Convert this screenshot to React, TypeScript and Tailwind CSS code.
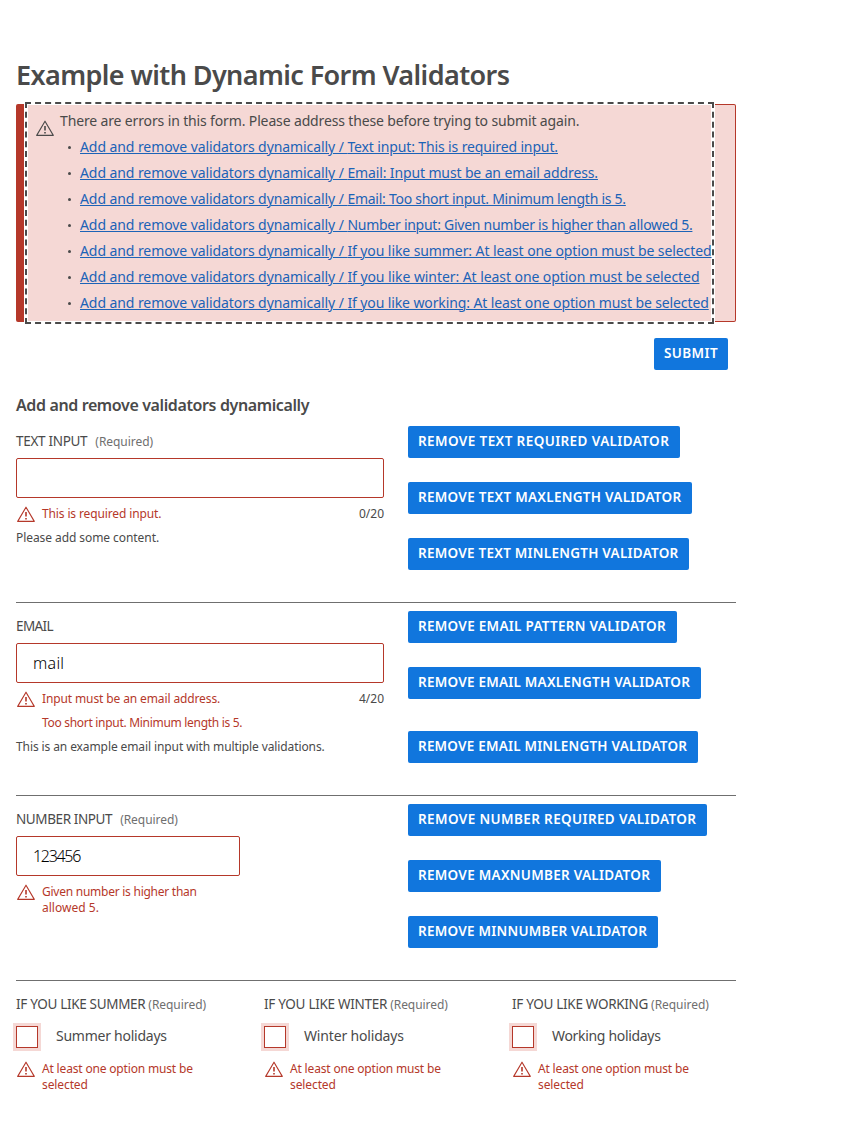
import { clsx } from "clsx";

const summary = [
  { text: "Text input: This is required input.", tracking: "tracking-[-0.13px]" },
  { text: "Email: Input must be an email address.", tracking: "tracking-[-0.13px]" },
  { text: "Email: Too short input. Minimum length is 5.", tracking: "tracking-[-0.26px]" },
  { text: "Number input: Given number is higher than allowed 5.", tracking: "tracking-[-0.26px]" },
  { text: "If you like summer: At least one option must be selected", tracking: "tracking-[-0.09px]" },
  { text: "If you like winter: At least one option must be selected", tracking: "tracking-[-0.07px]" },
  { text: "If you like working: At least one option must be selected", tracking: "tracking-[-0.11px]" },
];

function WarningIcon({ className }: { className?: string }) {
  return (
    <svg viewBox="0 0 18 16" fill="none" stroke="currentColor" className={clsx("h-4 w-[18px] shrink-0", className)}>
      <path d="M9 1.2 L17.3 15.4 H0.7 Z" strokeWidth="1.1" strokeLinejoin="round" />
      <path d="M9 6 V10.4 M9 12 V13.4" strokeWidth="1.6" />
    </svg>
  );
}

function Button({ width, tracking, children }: { width: string; tracking: string; children: string }) {
  return (
    <button
      className={clsx(
        "block h-8 rounded-[2px] bg-[#1176dd] px-2.5 pb-0.5 text-left text-[13.5px] leading-[30px] font-semibold whitespace-nowrap text-white",
        width,
        tracking,
      )}
    >
      {children}
    </button>
  );
}

function Label({ text, tracking, required, gap = "ml-2" }: { text: string; tracking: string; required?: boolean; gap?: string }) {
  return (
    <div className="flex h-8 items-center whitespace-nowrap">
      <span className={clsx("-mt-0.5 text-[13.5px] leading-5", tracking)}>{text}</span>
      {required && <span className={clsx("text-[12px] leading-5 tracking-[-0.05px] text-[#6f6f6f]", gap)}>(Required)</span>}
    </div>
  );
}

function Errors({ lines, counter, spaced }: { lines: { text: string; tracking: string }[]; counter?: string; spaced?: boolean }) {
  return (
    <div className="flex text-[12px] leading-4 whitespace-nowrap text-[#b5382a]">
      <WarningIcon className="ml-px" />
      <div className={clsx("ml-[7px] flex flex-1 flex-col", spaced && "gap-2")}>
        {lines.map((l) => (
          <span key={l.text} className={l.tracking}>
            {l.text}
          </span>
        ))}
      </div>
      {counter && <span className="text-[#4a4a4a]">{counter}</span>}
    </div>
  );
}

function Field({ width = "w-full", tracking = "tracking-[0.25px]", value }: { width?: string; tracking?: string; value: string }) {
  return (
    <input
      readOnly
      value={value}
      className={clsx("mb-2 block h-10 rounded-[2px] border border-[#b5382a] px-4 text-[16px] font-light text-black outline-none", width, tracking)}
    />
  );
}

function Choice({ title, option, titleTracking, optionTracking }: { title: string; option: string; titleTracking: string; optionTracking: string }) {
  return (
    <div>
      <Label text={title} tracking={titleTracking} required gap="ml-[3px]" />
      <label className="mt-[5px] flex h-[22px] items-center">
        <input type="checkbox" className="size-[22px] appearance-none border border-[#b5382a] bg-white ring-[3px] ring-[#f5d8d5]" />
        <span className={clsx("ml-[18px] -mt-0.5 text-[14px] leading-5", optionTracking)}>{option}</span>
      </label>
      <div className="mt-[13px]">
        <Errors
          lines={[
            { text: "At least one option must be", tracking: "tracking-[-0.17px]" },
            { text: "selected", tracking: "tracking-[-0.1px]" },
          ]}
        />
      </div>
    </div>
  );
}

export default function App() {
  return (
    <main className="min-h-[1141px] bg-white px-4 pt-14 font-['Noto_Sans',sans-serif] text-[#4a4a4a]">
      <div className="w-[720px]">
        <h1 className="h-12 text-[27px] leading-[37px] font-semibold tracking-[-0.6px] whitespace-nowrap">Example with Dynamic Form Validators</h1>

        <section className="h-[218px] rounded-[2px] border border-l-8 border-[#b5382a] bg-[#f5d8d5] pl-1">
          <div className="flex h-[216px] w-[683px] bg-[#f5d8d5] pt-[3px] shadow-[0_0_0_4px_white] outline-2 outline-offset-1 outline-dashed outline-[#4a4a4a]">
            <WarningIcon className="mt-3 ml-[7.5px]" />
            <div className="ml-[6.5px] text-[14px] leading-[26px] whitespace-nowrap">
              <p className="tracking-[-0.14px]">There are errors in this form. Please address these before trying to submit again.</p>
              <ul>
                {summary.map((s) => (
                  <li key={s.text} className="flex h-[26px] items-center pl-2">
                    <span className="mr-[9px] size-[3px] rounded-full bg-[#4a4a4a]" />
                    <a href="#" className="tracking-[-0.08px] text-[#1c63b7] underline decoration-1 underline-offset-1">
                      Add and remove validators dynamically / <span className={s.tracking}>{s.text}</span>
                    </a>
                  </li>
                ))}
              </ul>
            </div>
          </div>
        </section>

        <div className="mt-4 flex justify-end pr-2">
          <Button width="w-[74px]" tracking="tracking-[0.4px]">SUBMIT</Button>
        </div>

        <h2 className="mt-6 h-8 text-[16px] leading-[22px] font-semibold tracking-[-0.38px] whitespace-nowrap">Add and remove validators dynamically</h2>

        <section className="grid h-[177px] grid-cols-[368px_1fr] gap-x-6 border-b border-[#6f6f6f]">
          <div>
            <Label text="TEXT INPUT" tracking="tracking-[-0.3px]" required />
            <Field value="" />
            <Errors lines={[{ text: "This is required input.", tracking: "tracking-[-0.13px]" }]} counter="0/20" />
            <p className="mt-2 text-[12px] leading-4 tracking-[-0.07px]">Please add some content.</p>
          </div>
          <div className="flex flex-col gap-6">
            <Button width="w-[272px]" tracking="tracking-[0.4px]">REMOVE TEXT REQUIRED VALIDATOR</Button>
            <Button width="w-[284px]" tracking="tracking-[0.28px]">REMOVE TEXT MAXLENGTH VALIDATOR</Button>
            <Button width="w-[281px]" tracking="tracking-[0.25px]">REMOVE TEXT MINLENGTH VALIDATOR</Button>
          </div>
        </section>

        <section className="grid h-[193px] grid-cols-[368px_1fr] gap-x-6 border-b border-[#6f6f6f] pt-2">
          <div>
            <Label text="EMAIL" tracking="tracking-[-0.6px]" />
            <Field value="mail" />
            <Errors
              spaced
              lines={[
                { text: "Input must be an email address.", tracking: "tracking-[-0.12px]" },
                { text: "Too short input. Minimum length is 5.", tracking: "tracking-[-0.3px]" },
              ]}
              counter="4/20"
            />
            <p className="mt-2 text-[12px] leading-4 tracking-[-0.1px]">This is an example email input with multiple validations.</p>
          </div>
          <div className="flex flex-col gap-6">
            <Button width="w-[269px]" tracking="tracking-[0.28px]">REMOVE EMAIL PATTERN VALIDATOR</Button>
            <Button width="w-[293px]" tracking="tracking-[0.23px]">REMOVE EMAIL MAXLENGTH VALIDATOR</Button>
            <div className="pt-2">
              <Button width="w-[290px]" tracking="tracking-[0.2px]">REMOVE EMAIL MINLENGTH VALIDATOR</Button>
            </div>
          </div>
        </section>

        <section className="grid h-[185px] grid-cols-[368px_1fr] gap-x-6 border-b border-[#6f6f6f] pt-2">
          <div>
            <Label text="NUMBER INPUT" tracking="tracking-[-0.4px]" required />
            <Field value="123456" width="w-56" tracking="tracking-[-1.3px]" />
            <Errors
              lines={[
                { text: "Given number is higher than", tracking: "tracking-[-0.25px]" },
                { text: "allowed 5.", tracking: "tracking-[0.02px]" },
              ]}
            />
          </div>
          <div className="flex flex-col gap-6">
            <Button width="w-[299px]" tracking="tracking-[0.38px]">REMOVE NUMBER REQUIRED VALIDATOR</Button>
            <Button width="w-[253px]" tracking="tracking-[0.28px]">REMOVE MAXNUMBER VALIDATOR</Button>
            <Button width="w-[250px]" tracking="tracking-[0.24px]">REMOVE MINNUMBER VALIDATOR</Button>
          </div>
        </section>

        <section className="grid grid-cols-[224px_224px_224px] gap-x-6 pt-2">
          <Choice title="IF YOU LIKE SUMMER" option="Summer holidays" titleTracking="tracking-[-0.32px]" optionTracking="tracking-[-0.25px]" />
          <Choice title="IF YOU LIKE WINTER" option="Winter holidays" titleTracking="tracking-[-0.28px]" optionTracking="tracking-[-0.17px]" />
          <Choice title="IF YOU LIKE WORKING" option="Working holidays" titleTracking="tracking-[-0.3px]" optionTracking="tracking-[-0.32px]" />
        </section>
      </div>
    </main>
  );
}
